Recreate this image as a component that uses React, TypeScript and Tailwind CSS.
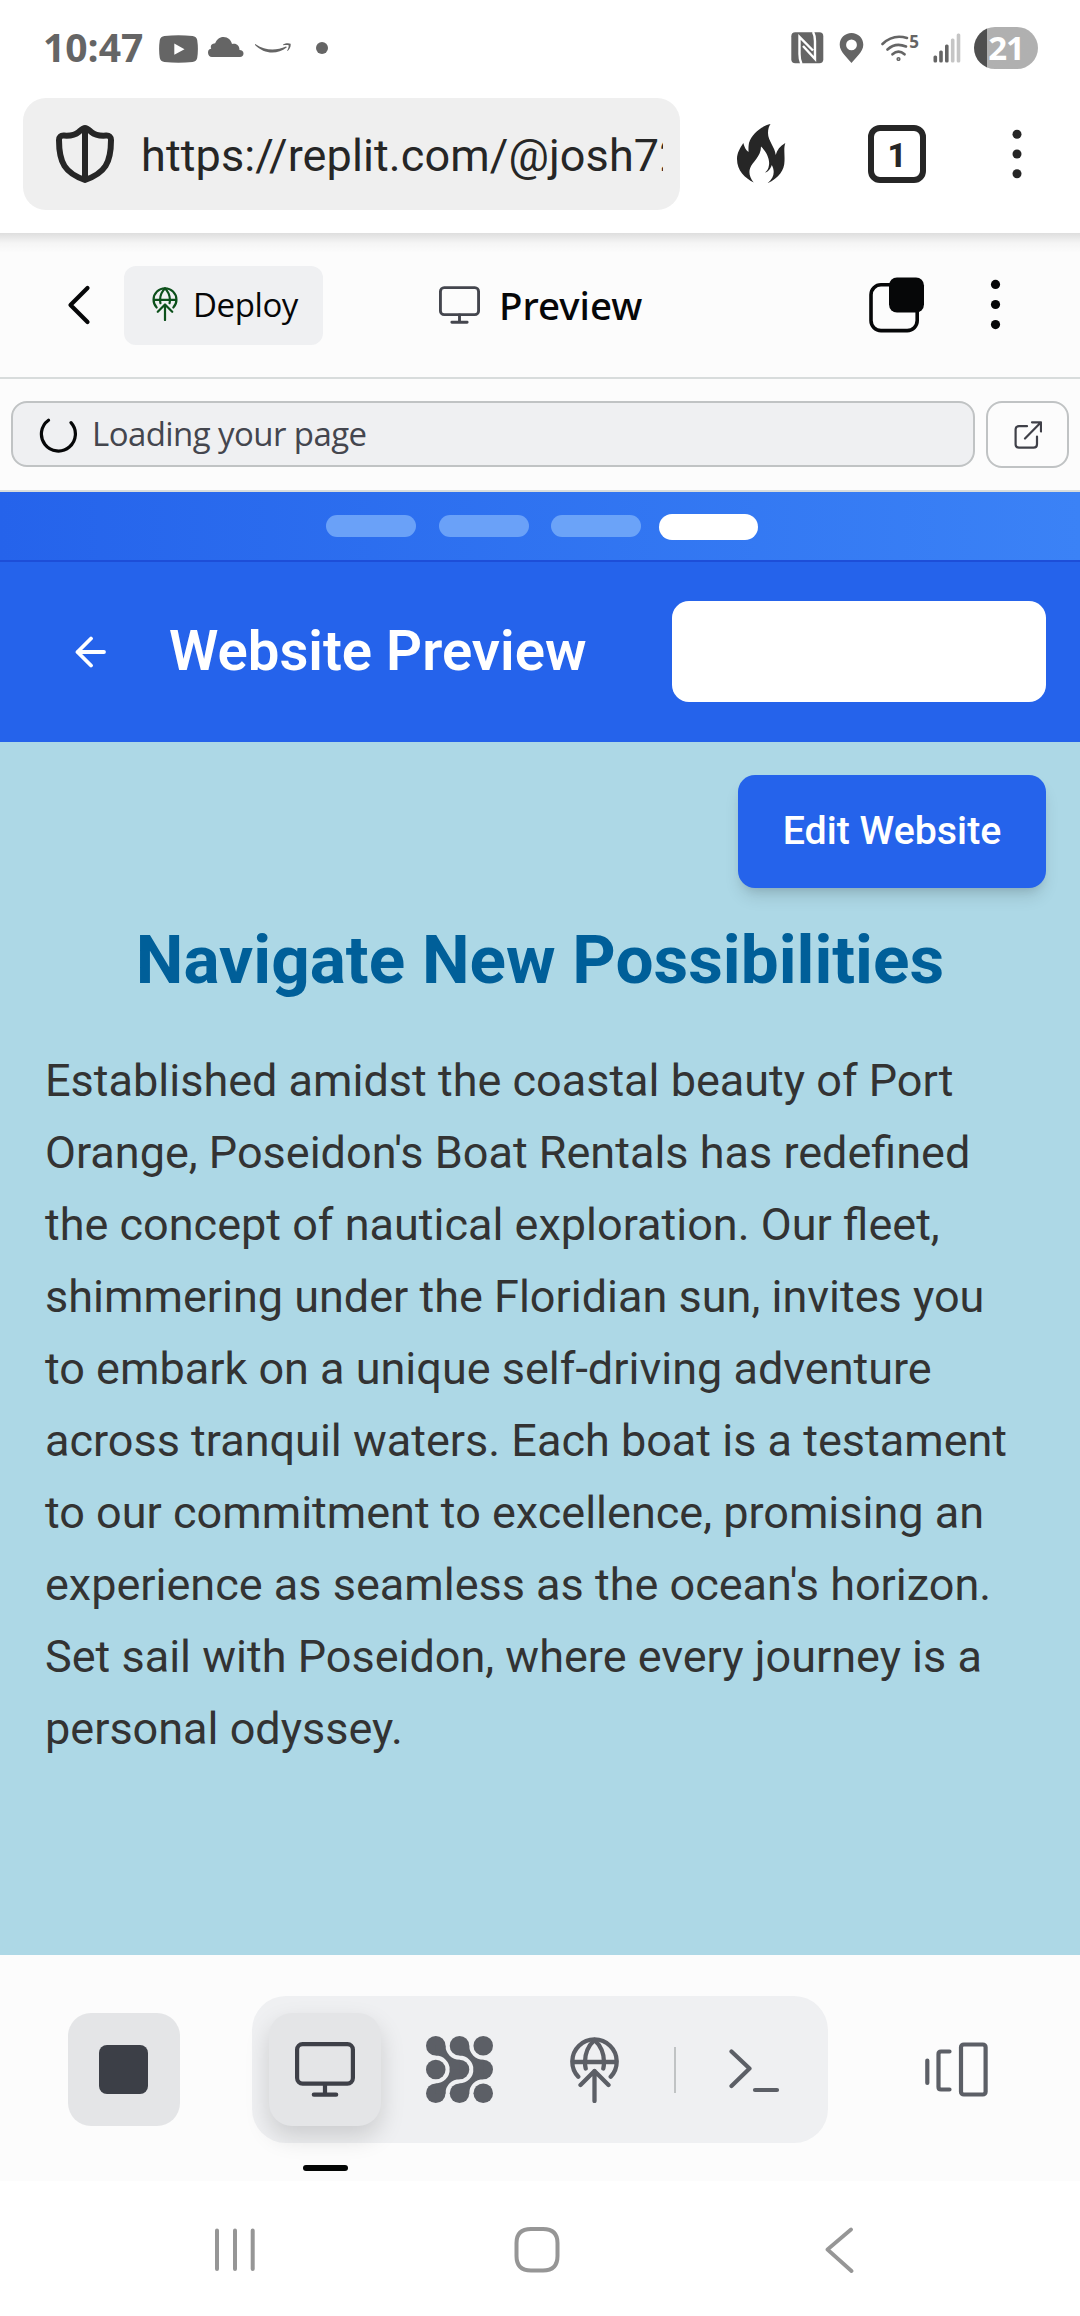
import type { ReactNode } from "react";

type IconProps = { className?: string };

function YouTubeIcon() {
  return (
    <svg className="h-7 w-[39px]" viewBox="0 0 39 28" fill="#656565">
      <path fillRule="evenodd" d="M5.5 1Q19.500 -0.600 33.500 1Q37.500 1.500 38.200 5Q39.600 14 38.200 23Q37.500 26.500 33.500 27.100Q19.500 28.600 5.500 27.100Q1.500 26.500 0.800 23Q-0.600 14 0.800 5Q1.500 1.500 5.500 1ZM15.300 8.500V19.800L25.500 14.200Z" />
    </svg>
  );
}

function CloudIcon() {
  return (
    <svg className="h-5 w-9" viewBox="0 0 36 20" fill="#656565">
      <path d="M4 20C1.500 20 0 18 0 15.500C0 13 1.500 12 3.200 11.800C2 8.500 4 6.500 7.200 6.300C8.500 2.500 11.500 0 15.500 0C20 0 23 3 24 7C28.500 6 31.500 8.500 31.500 13C34 13 35.500 14.500 35.500 16.500C35.500 18.500 34 20 32 20Z" />
    </svg>
  );
}

function SmileArrowIcon() {
  return (
    <svg className="h-[11px] w-9" viewBox="0 0 36 11" fill="#656565">
      <path d="M0 1.200Q0.400 0.800 1 1.400C10 7.500 21 7.800 31 3.500Q32 3.500 31.600 4.400C22 12 9 11 0 1.900Z" />
      <path d="M28 1.600C30.500 0 33.500 -0.200 35.600 0.700C36 3 35 6 32.700 7.900C32.200 8 32.200 7.600 32.500 7C33.200 5.200 34 3.200 33.600 2.300C32.500 1.600 30 2 28.300 2.200Z" />
    </svg>
  );
}

function NfcIcon() {
  return (
    <svg className="h-8 w-[33px]" viewBox="0 0 33 32">
      <rect x="0.300" y="0.300" width="32" height="31" rx="4" fill="#656565" />
      <path d="M10.500 32C9 29 8.500 26 8.500 22V5L22 18.500M22 0C23.800 3 24 6 24 9V27L12 14" fill="none" stroke="#fff" strokeWidth="2.400" />
    </svg>
  );
}

function PinIcon() {
  return (
    <svg className="h-[30px] w-[25px]" viewBox="0 0 25 30" fill="#656565">
      <path fillRule="evenodd" d="M12.500 0C19 0 24.300 5 24.300 11.800C24.300 19 16 25.500 12.500 30C9 25.500 0.700 19 0.700 11.800C0.700 5 6 0 12.500 0ZM12.500 6.500A5.400 5.400 0 1 0 12.500 17.300A5.400 5.400 0 1 0 12.500 6.500Z" />
    </svg>
  );
}

function WifiIcon() {
  return (
    <svg className="h-[26px] w-[28px]" viewBox="0 0 28 26" fill="none" stroke="#656565" strokeWidth="2.600" strokeLinecap="round">
      <path d="M1.500 9Q12 -1.200 26 3M6.500 14.500Q14.500 7 25 11.500M11.500 19.300Q17.500 14 23.500 19.300" />
      <circle cx="17.500" cy="24" r="0.800" />
    </svg>
  );
}

function SignalIcon() {
  return (
    <svg className="h-[30px] w-[28px]" viewBox="0 0 28 30">
      <g fill="#656565">
        <rect x="0.500" y="22.500" width="3.600" height="7" rx="1.500" />
        <rect x="6.200" y="17.500" width="3.600" height="12" rx="1.500" />
        <rect x="12" y="11.500" width="3.600" height="18" rx="1.500" />
      </g>
      <g fill="#c5c5c5">
        <rect x="17.900" y="5.500" width="3.600" height="24" rx="1.500" />
        <rect x="23.700" y="0.500" width="3.600" height="29" rx="1.500" />
      </g>
    </svg>
  );
}

function ShieldIcon() {
  return (
    <svg className="h-[58px] w-[58px]" viewBox="0 0 58 58" fill="none" stroke="#262626" strokeWidth="6" strokeLinejoin="round">
      <path d="M29 3C27 3 25 5 22.700 7C19 10.300 14 11 8 10.600C4.500 10.400 3 12 3 15C3 38 9 48 29 55C49 48 55 38 55 15C55 12 53.500 10.400 50 10.600C44 11 39 10.300 35.300 7C33 5 31 3 29 3ZM29 3V55" />
    </svg>
  );
}

function FireIcon() {
  return (
    <svg className="h-[60px] w-[49px]" viewBox="0 0 49 60" fill="#262626">
      <path d="M33.500 0C25 2 15 9 12 19C11.300 23 11.500 26 11.500 28C8.500 26 7.500 23 6.300 19C3 24 0 29 0 35C0 47 8 54 16.700 58.500C13 54 11.500 49 13 44.500C15 38 24 33 24 22.500C29 27 33 35 32 41C31.500 45 30 47 28 48.500C31 48 33.500 45 34.800 41C38 47 37.500 54 30.500 59.300C42 54 47.500 46 47.500 37C47.800 28 46.500 25 48.300 19C43 22 40 26 38.700 31C38 23 31 17 31 9C31 5 32 2 33.500 0Z" />
    </svg>
  );
}

function DeployIcon({ className }: IconProps) {
  return (
    <svg className={className} viewBox="0 0 49 66" fill="none" stroke="currentColor" strokeWidth="4.300" strokeLinecap="round" strokeLinejoin="round">
      <path d="M8.300 39.800A22.200 22.200 0 1 1 40.700 39.800M2.300 25H46.700" />
      <path d="M24.500 3C18 9 15 17 15 25C15 27.500 15.200 29.500 15.700 31.500M24.500 3C31 9 34 17 34 25C34 27.500 33.800 29.500 33.300 31.500" />
      <path d="M24.500 64V34M10.500 48L24.500 34L38.500 48" />
    </svg>
  );
}

function MonitorIcon({ className }: IconProps) {
  return (
    <svg className={className} viewBox="0 0 60 55" fill="none" stroke="currentColor" strokeWidth="4.200" strokeLinecap="round">
      <rect x="2.100" y="2.100" width="55.800" height="39.500" rx="5.500" />
      <path d="M30 42V52.500M18.800 52.700H41.200" />
    </svg>
  );
}

function MoreIcon({ className, color }: { className: string; color: string }) {
  return (
    <svg className={className} viewBox="0 0 10 50" fill={color}>
      <circle cx="5" cy="5.300" r="4.500" />
      <circle cx="5" cy="25" r="4.500" />
      <circle cx="5" cy="44.700" r="4.500" />
    </svg>
  );
}

function PanesIcon() {
  return (
    <svg className="h-[56px] w-[56px]" viewBox="0 0 56 56">
      <rect x="2" y="7.800" width="46.200" height="45.800" rx="10" fill="none" stroke="#060708" strokeWidth="3.600" />
      <rect x="20" y="0.500" width="35" height="35" rx="8" fill="#060708" />
    </svg>
  );
}

function ExternalIcon() {
  return (
    <svg className="h-7 w-7" viewBox="0 0 28 28" fill="none" stroke="#3f4048" strokeWidth="2.200" strokeLinecap="round" strokeLinejoin="round">
      <path d="M13 5.200H5Q1.600 5.200 1.600 8.600V23.200Q1.600 26.600 5 26.600H19.500Q23 26.600 23 23.200V15.500M18 1.300H27V10.500M27 1.300L11 17.500" />
    </svg>
  );
}

function BlobsIcon() {
  const neck = "M9.800 0A14 14 0 0 0 23.800 14V23.800H14A14 14 0 0 0 0 9.800V0Z";
  const centers = [9.8, 33.6, 57.4];
  return (
    <svg className="h-[67px] w-[67px]" viewBox="0 0 67.200 67.200" fill="#5c5f66">
      {centers.map((x) => centers.map((y) => <circle key={`${x}-${y}`} cx={x} cy={y} r="9.800" />))}
      <path transform="translate(9.800 9.800)" d={neck} />
      <path transform="translate(33.600 9.800)" d={neck} />
      <path transform="translate(9.800 57.400) scale(1 -1)" d={neck} />
      <path transform="translate(33.600 57.400) scale(1 -1)" d={neck} />
    </svg>
  );
}

function StatusBar() {
  return (
    <div className="flex h-[98px] items-center justify-between pl-[43px] pr-[42px]">
      <div className="flex items-center">
        <span className="-mt-[5px] w-[100px] font-['Open_Sans',sans-serif] text-[39px] font-bold leading-none text-[#656565]">10:47</span>
        <div className="-mt-px ml-4"><YouTubeIcon /></div>
        <div className="-mt-1 ml-[10px]"><CloudIcon /></div>
        <div className="-mt-0.5 ml-[11px]"><SmileArrowIcon /></div>
        <div className="-mt-0.5 ml-[25px] h-3 w-3 rounded-full bg-[#656565]" />
      </div>
      <div className="-mt-0.5 flex items-center">
        <NfcIcon />
        <div className="ml-[15px]"><PinIcon /></div>
        <div className="ml-[17px] flex items-start">
          <WifiIcon />
          <span className="-mt-px font-['Open_Sans',sans-serif] text-[17px] font-bold leading-4 text-[#656565]">5</span>
        </div>
        <div className="ml-[14px]"><SignalIcon /></div>
        <div className="ml-[13px] flex h-[42px] w-16 items-center justify-center rounded-full bg-linear-to-r from-[#4f4f4f] from-[21%] to-[#b0b0b0] to-[21%] font-['Open_Sans',sans-serif] text-[33px] font-bold leading-none text-white">
          <span className="-mt-0.5 tracking-[-1px]">21</span>
        </div>
      </div>
    </div>
  );
}

function BrowserBar() {
  return (
    <div className="flex h-[135px] items-start pl-[23px]">
      <div className="flex h-28 w-[657px] items-center rounded-[23px] bg-[#efefef] pl-[33px] pr-[17px]">
        <ShieldIcon />
        <span className="ml-[27px] mt-1 w-[522px] overflow-hidden whitespace-nowrap text-[45px] leading-[60px] tracking-[0.1px] text-[#262626]">https://replit.com/@josh72</span>
      </div>
      <div className="flex h-28 items-center">
        <div className="ml-[57px]"><FireIcon /></div>
        <div className="ml-[82px] flex h-[58px] w-[58px] items-center justify-center rounded-[12px] border-[6px] border-[#262626] text-[33px] font-extrabold leading-none text-[#262626]">
          <span className="mt-0.5">1</span>
        </div>
        <MoreIcon className="ml-[86px] h-[50px] w-[10px]" color="#262626" />
      </div>
    </div>
  );
}

function AppHeader() {
  return (
    <div className="relative flex h-[146px] items-center border-b-2 border-[#d8dcdc] bg-[#fcfcfc]">
      <div className="absolute inset-x-0 top-0 h-5 bg-linear-to-b from-black/12 via-black/3 to-transparent" />
      <svg className="ml-[67px] h-10 w-6" viewBox="0 0 24 40" fill="none" stroke="#060708" strokeWidth="4.200" strokeLinecap="round" strokeLinejoin="round">
        <path d="M20.500 3L3.500 20L20.500 37" />
      </svg>
      <div className="ml-[33px] flex h-[79px] w-[199px] items-center rounded-[12px] bg-[#eff0f2]">
        <DeployIcon className="ml-[28px] -mt-0.5 h-[34px] w-[26px] text-[#0c501b]" />
        <span className="-mt-px ml-[15px] font-['Open_Sans',sans-serif] text-[33px] leading-none tracking-[-0.4px] text-[#060708]">Deploy</span>
      </div>
      <MonitorIcon className="ml-[116px] h-[38px] w-[41px] text-[#44464e]" />
      <span className="ml-[19px] w-[160px] font-['Noto_Sans',sans-serif] text-[38.500px] font-medium leading-none text-[#060708]">Preview</span>
      <div className="ml-[210px]"><PanesIcon /></div>
      <MoreIcon className="-mt-0.5 ml-[65px] h-[51px] w-[11px]" color="#060708" />
    </div>
  );
}

function AddressRow() {
  return (
    <div className="flex h-[113px] items-start gap-[11px] border-b-2 border-[#d8dcdc] bg-[#fcfcfc] pl-[11px] pt-[22px]">
      <div className="flex h-[66px] w-[964px] items-center rounded-[16px] border-2 border-[#c0c3c4] bg-[#eff0f2] pl-[26px]">
        <svg className="h-[38px] w-[38px]" viewBox="0 0 38 38" fill="none" stroke="#060708" strokeWidth="3.200" strokeLinecap="round">
          <path d="M9.500 5.200A17 17 0 1 0 32 7.600" />
        </svg>
        <span className="-mt-px ml-[15px] font-['Open_Sans',sans-serif] text-[33px] leading-none tracking-[-0.58px] text-[#44464e]">Loading your page</span>
      </div>
      <div className="flex h-[67px] w-[83px] items-center justify-center rounded-[16px] border-2 border-[#c0c3c4]">
        <ExternalIcon />
      </div>
    </div>
  );
}

function SiteHeader() {
  return (
    <>
      <div className="flex h-[70px] items-center border-b-2 border-[#1d4ed8] bg-linear-to-r from-[#2563eb] to-[#3b82f6] pl-[326px]">
        <div className="h-[22px] w-[90px] rounded-full bg-[#6aa1f8]" />
        <div className="ml-[23px] h-[22px] w-[90px] rounded-full bg-[#6aa1f8]" />
        <div className="ml-[22px] h-[22px] w-[90px] rounded-full bg-[#6ba3f8]" />
        <div className="ml-[18px] mt-px h-[26px] w-[99px] rounded-full bg-white" />
      </div>
      <div className="flex h-[180px] items-center justify-between bg-[#2563eb] pl-[75px] pr-[34px]">
        <div className="flex items-center">
          <svg className="-mt-px h-8 w-8" viewBox="0 0 32 32" fill="none" stroke="#fff" strokeWidth="3.800" strokeLinecap="round" strokeLinejoin="round">
            <path d="M29 16H2.500M16 2.500L2.500 16L16 29.500" />
          </svg>
          <h1 className="-mt-0.5 ml-[62px] text-[56.25px] font-semibold leading-[76px] text-white">Website Preview</h1>
        </div>
        <div className="-mt-0.5 h-[101px] w-[374px] rounded-[17px] bg-white" />
      </div>
    </>
  );
}

function SiteContent() {
  return (
    <div className="flex h-[1213px] flex-col bg-[#add8e6] pt-[33px]">
      <button className="mr-[34px] flex h-[113px] w-[308px] items-center justify-center self-end rounded-[17px] bg-[#2563eb] pb-0.5 text-[39.375px] font-medium text-white shadow-[0_11px_17px_-3px_rgba(0,0,0,0.12),0_6px_11px_-6px_rgba(0,0,0,0.15)]">
        Edit Website
      </button>
      <h2 className="mt-[31px] text-center text-[67.500px] font-bold leading-[81px] text-[#005f99]">Navigate New Possibilities</h2>
      <p className="ml-[45px] mt-[45px] w-[990px] text-[45px] leading-[72px] text-[#333333]">
        Established amidst the coastal beauty of Port Orange, Poseidon's Boat Rentals has redefined the concept of nautical
        exploration. Our fleet, shimmering under the Floridian sun, invites you to embark on a unique self-driving adventure
        across tranquil waters. Each boat is a testament to our commitment to excellence, promising an experience as seamless
        as the ocean's horizon. Set sail with Poseidon, where every journey is a personal odyssey.
      </p>
    </div>
  );
}

function DockItem({ active, children }: { active?: boolean; children: ReactNode }) {
  return (
    <div
      className={
        active
          ? "flex h-[113px] w-28 items-center justify-center rounded-[23px] bg-[#e4e5e7] pr-px text-[#3e4048] shadow-[0_11px_24px_rgba(0,0,0,0.15)]"
          : "flex h-[113px] w-28 items-center justify-center text-[#5c5f66]"
      }
    >
      {children}
    </div>
  );
}

function Dock() {
  return (
    <div className="relative flex h-[226px] items-start bg-[#fcfcfc] pl-[68px]">
      <div className="mt-[58px] flex h-[113px] w-28 items-center justify-center rounded-[23px] bg-[#e4e5e7] pr-px">
        <div className="h-[49px] w-[49px] rounded-[8px] bg-[#3c3f47]" />
      </div>
      <div className="ml-[72px] mt-[41px] flex h-[147px] w-[576px] items-center rounded-[34px] bg-[#eff0f2] pl-[17px]">
        <DockItem active><MonitorIcon className="h-[55px] w-[60px]" /></DockItem>
        <div className="ml-[22px]"><DockItem><BlobsIcon /></DockItem></div>
        <div className="ml-[23px]"><DockItem><DeployIcon className="h-[66px] w-[49px]" /></DockItem></div>
        <div className="ml-6 h-[46px] w-0.5 bg-[#c0c3c4]" />
        <div className="ml-[22px]">
          <DockItem>
            <svg className="h-[46px] w-[52px]" viewBox="0 0 52 46" fill="none" stroke="currentColor" strokeWidth="4.200" strokeLinecap="round" strokeLinejoin="round">
              <path d="M3.500 4.500L21.500 21.500L3.500 39M27 43H49" />
            </svg>
          </DockItem>
        </div>
      </div>
      <svg className="ml-[96px] mt-[87px] h-[56px] w-[64px] text-[#5c5f66]" viewBox="0 0 64 56" fill="none" stroke="currentColor" strokeWidth="4.200" strokeLinecap="round" strokeLinejoin="round">
        <path d="M3.300 18.500V41M25.500 9.500H17Q14.500 9.500 14.500 12V45Q14.500 47.500 17 47.500H25.500" />
        <rect x="37" y="2.500" width="24.600" height="50" rx="2.800" />
      </svg>
      <div className="absolute left-[303px] top-[210px] h-1.5 w-[45px] rounded-full bg-[#040605]" />
    </div>
  );
}

function SystemNav() {
  return (
    <div className="flex h-[135px] items-start bg-white pt-[44px]">
      <svg className="ml-[214px] h-12 w-[42px]" viewBox="0 0 42 48" stroke="#969696" strokeWidth="4" strokeLinecap="round">
        <path d="M3 5.500V44M21 5.500V44M38.700 5.500V44" />
      </svg>
      <svg className="ml-[257px] h-12 w-12" viewBox="0 0 48 48" fill="none" stroke="#969696" strokeWidth="4">
        <path d="M18 4H30Q44.500 4 44.500 18V31Q44.500 45.500 30 45.500H18Q3.500 45.500 3.500 31V18Q3.500 4 18 4Z" />
      </svg>
      <svg className="ml-[262px] h-12 w-8" viewBox="0 0 32 48" fill="none" stroke="#969696" strokeWidth="3.800" strokeLinecap="round" strokeLinejoin="round">
        <path d="M28 4.500L4.500 24.500L28.500 46" />
      </svg>
    </div>
  );
}

export default function App() {
  return (
    <div className="h-[2316px] w-[1080px] overflow-hidden bg-white font-['Roboto',sans-serif]">
      <StatusBar />
      <BrowserBar />
      <AppHeader />
      <AddressRow />
      <SiteHeader />
      <SiteContent />
      <Dock />
      <SystemNav />
    </div>
  );
}
